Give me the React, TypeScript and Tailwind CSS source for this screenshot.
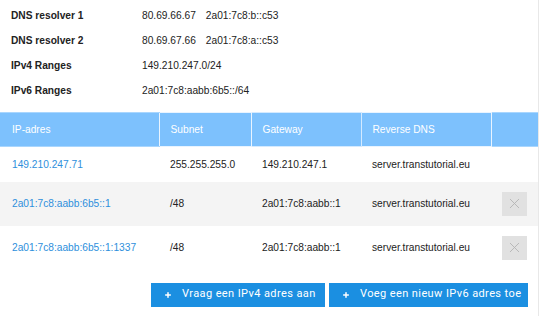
import { Plus, X } from "lucide-react";

const resolvers = [
  { label: "DNS resolver 1", value: "80.69.66.67", extra: "2a01:7c8:b::c53" },
  { label: "DNS resolver 2", value: "80.69.67.66", extra: "2a01:7c8:a::c53" },
  { label: "IPv4 Ranges", value: "149.210.247.0/24" },
  { label: "IPv6 Ranges", value: "2a01:7c8:aabb:6b5::/64" },
];

const rows = [
  { ip: "149.210.247.71", subnet: "255.255.255.0", gw: "149.210.247.1", rdns: "server.transtutorial.eu", del: false },
  { ip: "2a01:7c8:aabb:6b5::1", subnet: "/48", gw: "2a01:7c8:aabb::1", rdns: "server.transtutorial.eu", del: true },
  { ip: "2a01:7c8:aabb:6b5::1:1337", subnet: "/48", gw: "2a01:7c8:aabb::1", rdns: "server.transtutorial.eu", del: true },
];

export default function App() {
  return (
    <div
      className="h-[316px] w-[540px] overflow-hidden bg-white text-[10.2px] text-[#222]"
      style={{ fontFamily: '"Liberation Sans", Arial, sans-serif' }}
    >
      <div className="h-full w-[539px] border-r border-[#e8e8e8]">
        <div className="pt-[3px] pb-[9px]">
          {resolvers.map((r) => (
            <div key={r.label} className="flex h-[25px] items-center">
              <div className="w-[142px] pl-[11px] font-bold">{r.label}</div>
              <div>{r.value}</div>
              {r.extra && <div className="ml-[10px]">{r.extra}</div>}
            </div>
          ))}
        </div>

        <table className="w-[538px] border-collapse text-left">
          <thead>
            <tr className="h-[34px] bg-[#7dc1fd] text-white">
              <th className="w-[159px] border-y border-[#a9d6fe] pl-[12px] font-normal">IP-adres</th>
              <th className="w-[92px] border border-[#e9f4ff] pl-[11px] font-normal">Subnet</th>
              <th className="w-[110px] border border-[#d4eaff] pl-[11px] font-normal">Gateway</th>
              <th className="w-[130px] border border-[#e9f4ff] pl-[11px] font-normal">Reverse DNS</th>
              <th className="border-y border-[#a9d6fe]" />
            </tr>
          </thead>
          <tbody>
            {rows.map((r, i) => (
              <tr key={r.ip} className={`${i === 0 ? "h-[35px]" : "h-[44px]"} ${i === 1 ? "bg-[#f4f4f4]" : "bg-white"}`}>
                <td className="pl-[12px] text-[#2e8fdc]">{r.ip}</td>
                <td className="pl-[11px]">{r.subnet}</td>
                <td className="pl-[11px]">{r.gw}</td>
                <td className="pl-[11px]">{r.rdns}</td>
                <td className="pl-[11px]">
                  {r.del && (
                    <button
                      type="button"
                      className="flex h-[24px] w-[25px] items-center justify-center bg-[#e1e1e1] text-[#b5b5b5]"
                    >
                      <X className="h-[17px] w-[17px]" strokeWidth={1.3} />
                    </button>
                  )}
                </td>
              </tr>
            ))}
          </tbody>
        </table>

        <div className="mt-[13px] flex justify-end gap-[4px] pr-[10px]">
          <button
            type="button"
            className="flex h-[24px] w-[174px] items-center gap-[10px] whitespace-nowrap bg-[#1b8fe1] pl-[13px] text-[11px] tracking-[0.4px] text-white"
            style={{ fontFamily: "Roboto, sans-serif" }}
          >
            <Plus className="h-[8px] w-[8px] shrink-0" strokeWidth={4.5} />
            Vraag een IPv4 adres aan
          </button>
          <button
            type="button"
            className="flex h-[24px] w-[199px] items-center gap-[10px] whitespace-nowrap bg-[#1b8fe1] pl-[13px] text-[11px] tracking-[0.4px] text-white"
            style={{ fontFamily: "Roboto, sans-serif" }}
          >
            <Plus className="h-[8px] w-[8px] shrink-0" strokeWidth={4.5} />
            Voeg een nieuw IPv6 adres toe
          </button>
        </div>
      </div>
    </div>
  );
}
